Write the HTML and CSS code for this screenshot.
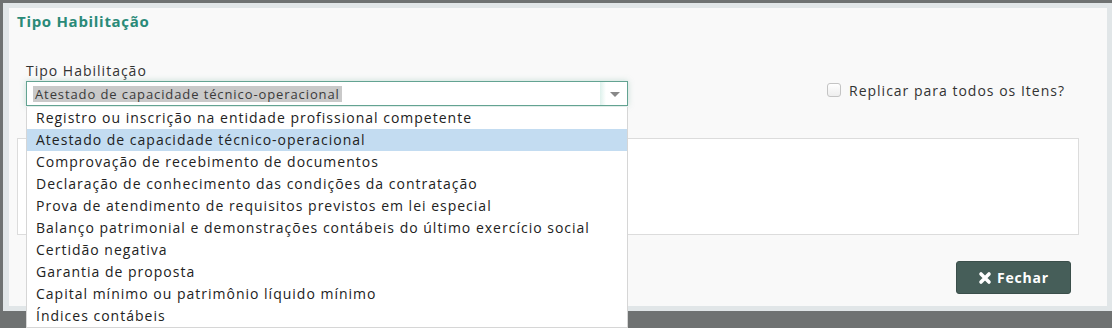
FILE: index.html
```html
<!DOCTYPE html>
<html lang="pt">
<head>
    <meta charset="UTF-8">
    <title>Tipo Habilitação</title>
    <link rel="stylesheet" href="styles.css">
</head>
<body>
    <div class="modal">
        <div class="modal-content">
            <div class="modal-header">
                <h4>Tipo Habilitação</h4>
            </div>
            <div class="modal-body">
                <div class="form-row">
                    <div class="field">
                        <label class="field-label">Tipo Habilitação</label>
                        <div class="select open">
                            <div class="select-box">
                                <span class="select-value">Atestado de capacidade técnico-operacional</span>
                                <span class="select-arrow"></span>
                            </div>
                            <ul class="select-list">
                                <li>Registro ou inscrição na entidade profissional competente</li>
                                <li class="active">Atestado de capacidade técnico-operacional</li>
                                <li>Comprovação de recebimento de documentos</li>
                                <li>Declaração de conhecimento das condições da contratação</li>
                                <li>Prova de atendimento de requisitos previstos em lei especial</li>
                                <li>Balanço patrimonial e demonstrações contábeis do último exercício social</li>
                                <li>Certidão negativa</li>
                                <li>Garantia de proposta</li>
                                <li>Capital mínimo ou patrimônio líquido mínimo</li>
                                <li>Índices contábeis</li>
                            </ul>
                        </div>
                    </div>
                    <label class="check">
                        <span class="check-box"></span>
                        Replicar para todos os Itens?
                    </label>
                </div>

                <div class="panel"></div>

                <div class="modal-footer">
                    <button class="btn-close">
                        <svg width="14" height="14" viewBox="0 0 14 14">
                            <path d="M3 3 L11 11 M11 3 L3 11" stroke="#fff" stroke-width="3.6" stroke-linecap="round"/>
                        </svg>
                        Fechar
                    </button>
                </div>
            </div>
        </div>
    </div>
</body>
</html>
```

FILE: styles.css
```css
* { margin: 0; padding: 0; box-sizing: border-box; }

body {
    font-family: "Open Sans", "DejaVu Sans", sans-serif;
    letter-spacing: 1px;
    background: #6f7272;
    height: 328px;
    overflow: hidden;
    color: #333;
}

.modal {
    margin: 3px 0 0 3px;
    height: 308px;
    border: 6px solid #e1e6e8;
    border-top-width: 5px;
    border-bottom-width: 5px;
    border-right-width: 5px;
}

.modal-content {
    background: #f9f9f9;
    height: 100%;
}

.modal-header {
    height: 37px;
    padding: 3px 8px 0;
}

.modal-header h4 {
    font-size: 15px;
    font-weight: bold;
    letter-spacing: 0.7px;
    color: #2a8a78;
    line-height: 20px;
}

.modal-body {
    padding: 18px 0 0 8px;
}

.form-row {
    display: flex;
    padding-left: 9px;
}

.field {
    width: 602px;
}

.field-label {
    display: block;
    font-size: 14px;
    line-height: 16px;
    margin-bottom: 2px;
    color: #333;
}

.select {
    position: relative;
}

.select-box {
    display: flex;
    align-items: center;
    height: 25px;
    background: #fff;
    border: 1px solid #63a392;
    box-shadow: 0 0 6px rgba(99, 170, 150, 0.35);
    padding-left: 6px;
}

.select-value {
    font-size: 13px;
    letter-spacing: 0.9px;
    background: #c9c9c9;
    color: #3a3a3a;
    line-height: 16px;
    padding: 0 2px;
}

.select-arrow {
    margin-left: auto;
    width: 27px;
    height: 100%;
    position: relative;
    background: linear-gradient(to right, rgba(160, 215, 200, 0.35), #fff 6px);
}

.select-arrow::after {
    content: "";
    position: absolute;
    left: 10px;
    top: 10px;
    border-left: 5px solid transparent;
    border-right: 5px solid transparent;
    border-top: 5px solid #888;
}

.select-list {
    position: absolute;
    top: 26px;
    left: 0;
    right: 0;
    list-style: none;
    background: #fff;
    border: 1px solid #d6d6d6;
    border-top: none;
    z-index: 2;
}

.select-list li {
    font-size: 14px;
    line-height: 22px;
    padding-left: 9px;
    color: #222;
    white-space: nowrap;
}

.select-list li.active {
    background: #c3dcf1;
}

.check {
    display: flex;
    align-items: center;
    gap: 8px;
    margin: 19px 0 0 199px;
    height: 16px;
    font-size: 14px;
    color: #333;
}

.check-box {
    width: 14px;
    height: 14px;
    border: 1px solid #c4c4c4;
    border-radius: 3px;
    background: linear-gradient(#fff, #eee);
}

.panel {
    margin: 32px 28px 0 0;
    height: 97px;
    background: #fff;
    border: 1px solid #dcdcdc;
}

.modal-footer {
    display: flex;
    justify-content: flex-end;
    padding: 26px 36px 0 0;
}

.btn-close {
    display: flex;
    align-items: center;
    justify-content: center;
    gap: 5px;
    width: 115px;
    height: 33px;
    background: #465e59;
    border: 1px solid #3b4f4b;
    border-radius: 3px;
    color: #fff;
    font-family: inherit;
    font-size: 14px;
    font-weight: bold;
    letter-spacing: 0.8px;
}
```
